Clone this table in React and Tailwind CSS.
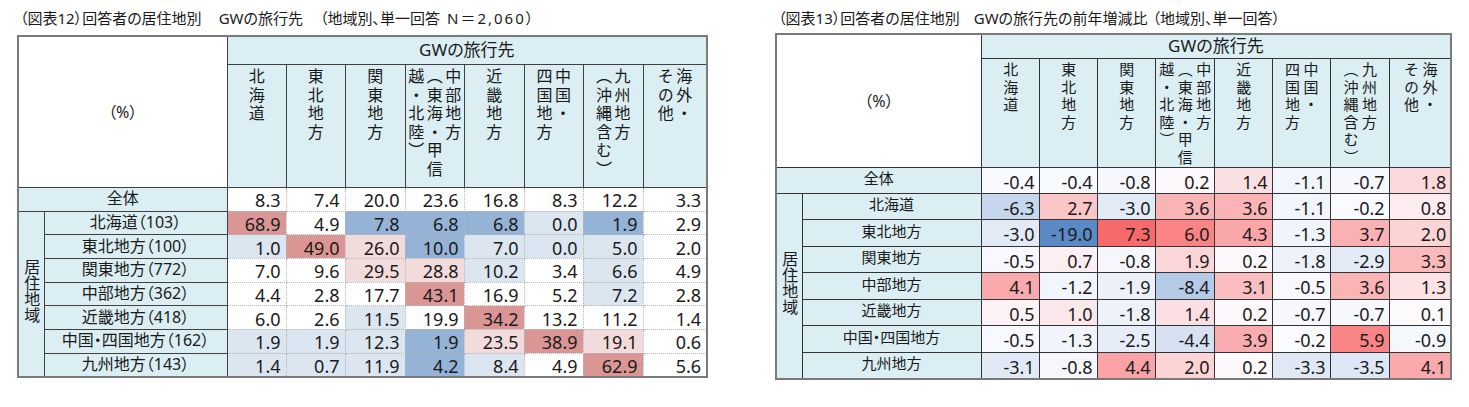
import React from 'react'

const heads = [
  ['北海道'],
  ['東北地方'],
  ['関東地方'],
  ['中部地方', '︵東海・甲信', '越・北陸︶'],
  ['近畿地方'],
  ['中国・', '四国地方'],
  ['九州地方', '︵沖縄含む︶'],
  ['海外・', 'その他'],
]

// left table: share of trips, with category shading
const shareTotal = ['8.3', '7.4', '20.0', '23.6', '16.8', '8.3', '12.2', '3.3']
const shareRows = [
  { name: '北海道（103）', vals: ['68.9', '4.9', '7.8', '6.8', '6.8', '0.0', '1.9', '2.9'], tone: 'RWBBBLBW' },
  { name: '東北地方（100）', vals: ['1.0', '49.0', '26.0', '10.0', '7.0', '0.0', '5.0', '2.0'], tone: 'LRPBLLLW' },
  { name: '関東地方（772）', vals: ['7.0', '9.6', '29.5', '28.8', '10.2', '3.4', '6.6', '4.9'], tone: 'WWPPLWLW' },
  { name: '中部地方（362）', vals: ['4.4', '2.8', '17.7', '43.1', '16.9', '5.2', '7.2', '2.8'], tone: 'WWWRWWLW' },
  { name: '近畿地方（418）', vals: ['6.0', '2.6', '11.5', '19.9', '34.2', '13.2', '11.2', '1.4'], tone: 'WWLWRWWW' },
  { name: '中国・四国地方（162）', vals: ['1.9', '1.9', '12.3', '1.9', '23.5', '38.9', '19.1', '0.6'], tone: 'LLLBPRPW' },
  { name: '九州地方（143）', vals: ['1.4', '0.7', '11.9', '4.2', '8.4', '4.9', '62.9', '5.6'], tone: 'LLLBLWRW' },
]
const toneBg = {
  R: 'bg-[#da9694]',
  P: 'bg-[#f2dcdb]',
  B: 'bg-[#95b3d7]',
  L: 'bg-[#dce6f1]',
  W: 'bg-white',
}

// right table: year-on-year change, colour scale
const diffTotal = [-0.4, -0.4, -0.8, 0.2, 1.4, -1.1, -0.7, 1.8]
const diffRows = [
  { name: '北海道', vals: [-6.3, 2.7, -3.0, 3.6, 3.6, -1.1, -0.2, 0.8] },
  { name: '東北地方', vals: [-3.0, -19.0, 7.3, 6.0, 4.3, -1.3, 3.7, 2.0] },
  { name: '関東地方', vals: [-0.5, 0.7, -0.8, 1.9, 0.2, -1.8, -2.9, 3.3] },
  { name: '中部地方', vals: [4.1, -1.2, -1.9, -8.4, 3.1, -0.5, 3.6, 1.3] },
  { name: '近畿地方', vals: [0.5, 1.0, -1.8, 1.4, 0.2, -0.7, -0.7, 0.1] },
  { name: '中国・四国地方', vals: [-0.5, -1.3, -2.5, -4.4, 3.9, -0.2, 5.9, -0.9] },
  { name: '九州地方', vals: [-3.1, -0.8, 4.4, 2.0, 0.2, -3.3, -3.5, 4.1] },
]

function scaleColor(v) {
  const mid = [252, 252, 255]
  const end = v >= 0 ? [248, 105, 107] : [90, 138, 198]
  const t = Math.min(1, v >= 0 ? v / 7.3 : v / -19)
  const c = mid.map((m, i) => Math.round(m + (end[i] - m) * t))
  return `rgb(${c[0]},${c[1]},${c[2]})`
}

function VText({ lines, size }) {
  return (
    <div className={`inline-block align-top text-left [writing-mode:vertical-rl] [text-orientation:upright] [font-feature-settings:normal] font-['Noto_Sans_CJK_JP',sans-serif] ${size}`}>
      {lines.map((l, i) => <span key={i} className="block">{l}</span>)}
    </div>
  )
}

function ShareTable() {
  const hd = 'border border-[#404040] bg-[#daeef3] font-normal'
  const num = 'border border-dotted border-[#b5b5b5] text-right pr-[5px] pt-[2px] text-[18px] leading-[20px] align-middle'
  return (
    <table className="table-fixed w-[689px] border-2 border-[#7a7a7a]">
      <colgroup>
        <col className="w-[26px]" />
        <col className="w-[183px]" />
        <col className="w-[59px]" />
        <col className="w-[59px]" />
        <col className="w-[60px]" />
        <col className="w-[59px]" />
        <col className="w-[60px]" />
        <col className="w-[59px]" />
        <col className="w-[60px]" />
        <col className="w-[64px]" />
      </colgroup>
      <thead>
        <tr className="h-[28px]">
          <th rowSpan={2} colSpan={2} className="border border-[#404040] bg-white font-normal text-[16px]">（%）</th>
          <th colSpan={8} className={`${hd} text-[17px] leading-[20px]`}>GWの旅行先</th>
        </tr>
        <tr className="h-[123px]">
          {heads.map((h, i) => (
            <th key={i} className={`${hd} align-top text-center pt-[3px]`}>
              <VText lines={h} size="text-[16px] leading-[18.5px] tracking-[2.5px]" />
            </th>
          ))}
        </tr>
      </thead>
      <tbody>
        <tr className="h-[24px]">
          <td colSpan={2} className={`${hd} text-center text-[16px] leading-[18px] pb-[2px]`}>全体</td>
          {shareTotal.map((v, i) => <td key={i} className={`${num} bg-white`}>{v}</td>)}
        </tr>
        {shareRows.map((r, ri) => (
          <tr key={ri} className="h-[23.7px]">
            {ri === 0 && (
              <td rowSpan={7} className={`${hd} text-center`}>
                <div className="inline-block [writing-mode:vertical-rl] text-[16px] leading-[18px]">居住地域</div>
              </td>
            )}
            <td className={`${hd} text-center text-[16px] leading-[18px] pb-[2px]`}>{r.name}</td>
            {r.vals.map((v, i) => (
              <td key={i} className={`${num} ${toneBg[r.tone[i]]}`}>{v}</td>
            ))}
          </tr>
        ))}
      </tbody>
    </table>
  )
}

function DiffTable() {
  const hd = 'border border-[#333333] bg-[#daeef3] font-normal'
  const num = 'border border-[#333333] text-right pr-[4px] pt-[3px] text-[18px] leading-[20px] align-middle'
  return (
    <table className="table-fixed w-[675px] border-2 border-[#7a7a7a]">
      <colgroup>
        <col className="w-[26px]" />
        <col className="w-[179px]" />
        <col className="w-[58px]" />
        <col className="w-[58px]" />
        <col className="w-[58px]" />
        <col className="w-[59px]" />
        <col className="w-[58px]" />
        <col className="w-[58px]" />
        <col className="w-[59px]" />
        <col className="w-[62px]" />
      </colgroup>
      <thead>
        <tr className="h-[24px]">
          <th rowSpan={2} colSpan={2} className="border border-[#333333] bg-white font-normal text-[16px]">（%）</th>
          <th colSpan={8} className={`${hd} text-[17px] leading-[20px]`}>GWの旅行先</th>
        </tr>
        <tr className="h-[108px]">
          {heads.map((h, i) => (
            <th key={i} className={`${hd} align-top text-center pt-[3px]`}>
              <VText lines={h} size="text-[15px] leading-[18.5px] tracking-[2.5px]" />
            </th>
          ))}
        </tr>
      </thead>
      <tbody>
        <tr className="h-[26px]">
          <td colSpan={2} className={`${hd} text-center text-[15px] leading-[18px] pb-[4px]`}>全体</td>
          {diffTotal.map((v, i) => (
            <td key={i} className={num} style={{ backgroundColor: scaleColor(v) }}>{v.toFixed(1)}</td>
          ))}
        </tr>
        {diffRows.map((r, ri) => (
          <tr key={ri} className="h-[26.5px]">
            {ri === 0 && (
              <td rowSpan={7} className={`${hd} text-center`}>
                <div className="inline-block [writing-mode:vertical-rl] text-[16px] leading-[18px]">居住地域</div>
              </td>
            )}
            <td className={`${hd} text-center text-[15px] leading-[18px] pb-[4px]`}>{r.name}</td>
            {r.vals.map((v, i) => (
              <td key={i} className={num} style={{ backgroundColor: scaleColor(v) }}>{v.toFixed(1)}</td>
            ))}
          </tr>
        ))}
      </tbody>
    </table>
  )
}

export default function App() {
  return (
    <div className="w-[1469px] h-[407px] bg-white text-[#1a1a1a] font-['Noto_Sans','Noto_Sans_CJK_JP',sans-serif] [font-feature-settings:'palt'] flex items-start pl-[17px]">
      <div className="flex flex-col pt-[8px]">
        <div className="pl-[3px] text-[15px] leading-[20px] h-[27px] flex">
          <span>（図表12）回答者の居住地別</span>
          <span className="ml-[17px]">GWの旅行先</span>
          <span className="ml-[17px]">（地域別、単一回答</span>
          <span className="ml-[7px] tracking-[2px]">N＝2,060）</span>
        </div>
        <ShareTable />
      </div>
      <div className="flex flex-col pt-[8px] ml-[67px]">
        <div className="pl-[3px] text-[15px] leading-[20px] h-[25px] flex">
          <span>（図表13）回答者の居住地別</span>
          <span className="ml-[14px]">GWの旅行先の前年増減比</span>
          <span className="ml-[5px]">（地域別、単一回答）</span>
        </div>
        <DiffTable />
      </div>
    </div>
  )
}
